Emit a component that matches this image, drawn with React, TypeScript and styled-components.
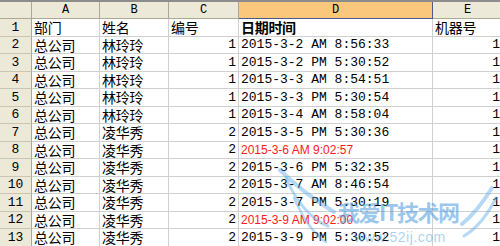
import React from 'react';
import styled, { createGlobalStyle } from 'styled-components';

const GlobalStyle = createGlobalStyle`
  html, body {
    margin: 0;
    padding: 0;
    background: #ffffff;
    overflow: hidden;
  }
`;

const COLS = '32px 68px 69px 70px 194px 70px';

const Wrap = styled.div`
  position: relative;
  width: 500px;
  height: 246px;
  overflow: hidden;
  border-top: 2px solid #8c8c8c;
  box-sizing: border-box;
`;

const Sheet = styled.div`
  display: grid;
  grid-template-columns: ${COLS};
  grid-template-rows: 17px repeat(13, 17.5px);
`;

const ColHead = styled.div<{ $active?: boolean }>`
  display: flex;
  align-items: center;
  justify-content: center;
  background: ${(p) => (p.$active ? '#fbc77c' : '#ece9d8')};
  border-right: 1px solid ${(p) => (p.$active ? '#4d5a8a' : '#aca899')};
  border-bottom: 1px solid ${(p) => (p.$active ? '#4d5a8a' : '#aca899')};
  font-family: 'Liberation Mono', monospace;
  font-size: 12px;
  line-height: 1;
  color: #000;
  box-sizing: border-box;
`;

const RowNum = styled.div`
  display: flex;
  align-items: center;
  justify-content: center;
  background: #ece9d8;
  border-right: 1px solid #aca899;
  border-bottom: 1px solid #c9c6b6;
  font-family: 'Liberation Mono', monospace;
  font-size: 13px;
  line-height: 1;
  color: #000;
  box-sizing: border-box;
`;

const Cell = styled.div<{ $right?: boolean }>`
  display: flex;
  align-items: center;
  justify-content: ${(p) => (p.$right ? 'flex-end' : 'flex-start')};
  padding: 0 2px;
  border-right: 1px solid #d0d0d0;
  border-bottom: 1px solid #d0d0d0;
  box-sizing: border-box;
  white-space: nowrap;
  overflow: visible;
  font-family: 'Liberation Mono', monospace;
  font-size: 13px;
  line-height: 1;
  color: #000;
`;

const CnText = styled.span<{ $bold?: boolean }>`
  font-family: 'Noto Sans CJK SC', sans-serif;
  font-size: 14px;
  line-height: 1;
  font-weight: ${(p) => (p.$bold ? 700 : 400)};
  letter-spacing: -0.3px;
`;

const RedTime = styled.span`
  font-family: 'Liberation Sans', Arial, sans-serif;
  font-size: 12px;
  line-height: 1;
  color: #ff1a1a;
`;

const Watermark = styled.div`
  position: absolute;
  left: 268px;
  top: 166px;
  width: 232px;
  height: 80px;
  pointer-events: none;
`;

const MarkTitle = styled.div`
  position: absolute;
  left: 70px;
  top: 32px;
  font-family: 'Noto Sans CJK SC', sans-serif;
  font-size: 22px;
  line-height: 1;
  font-weight: 700;
  color: rgba(70, 150, 220, 0.55);
  letter-spacing: -1.5px;
`;

const MarkUrl = styled.div`
  position: absolute;
  left: 86px;
  top: 62px;
  font-family: 'Liberation Sans', sans-serif;
  font-size: 14px;
  line-height: 1;
  color: rgba(90, 165, 225, 0.5);
  letter-spacing: 0.5px;
`;

type Row = {
  dept: string;
  name: string;
  no: string;
  time: string;
  red?: boolean;
  machine: string;
};

const rows: Row[] = [
  { dept: '总公司', name: '林玲玲', no: '1', time: '2015-3-2 AM 8:56:33', machine: '1' },
  { dept: '总公司', name: '林玲玲', no: '1', time: '2015-3-2 PM 5:30:52', machine: '1' },
  { dept: '总公司', name: '林玲玲', no: '1', time: '2015-3-3 AM 8:54:51', machine: '1' },
  { dept: '总公司', name: '林玲玲', no: '1', time: '2015-3-3 PM 5:30:54', machine: '1' },
  { dept: '总公司', name: '林玲玲', no: '1', time: '2015-3-4 AM 8:58:04', machine: '1' },
  { dept: '总公司', name: '凌华秀', no: '2', time: '2015-3-5 PM 5:30:36', machine: '1' },
  { dept: '总公司', name: '凌华秀', no: '2', time: '2015-3-6 AM 9:02:57', red: true, machine: '1' },
  { dept: '总公司', name: '凌华秀', no: '2', time: '2015-3-6 PM 5:32:35', machine: '1' },
  { dept: '总公司', name: '凌华秀', no: '2', time: '2015-3-7 AM 8:46:54', machine: '1' },
  { dept: '总公司', name: '凌华秀', no: '2', time: '2015-3-7 PM 5:30:19', machine: '1' },
  { dept: '总公司', name: '凌华秀', no: '2', time: '2015-3-9 AM 9:02:00', red: true, machine: '1' },
  { dept: '总公司', name: '凌华秀', no: '2', time: '2015-3-9 PM 5:30:52', machine: '1' },
];

const letters = ['A', 'B', 'C', 'D', 'E'];

const App: React.FC = () => {
  return (
    <>
      <GlobalStyle />
      <Wrap>
        <Sheet>
          <ColHead />
          {letters.map((l) => (
            <ColHead key={l} $active={l === 'D'}>
              {l}
            </ColHead>
          ))}

          <RowNum>1</RowNum>
          <Cell><CnText>部门</CnText></Cell>
          <Cell><CnText>姓名</CnText></Cell>
          <Cell><CnText>编号</CnText></Cell>
          <Cell><CnText $bold>日期时间</CnText></Cell>
          <Cell><CnText>机器号</CnText></Cell>

          {rows.map((r, i) => (
            <React.Fragment key={i}>
              <RowNum>{i + 2}</RowNum>
              <Cell><CnText>{r.dept}</CnText></Cell>
              <Cell><CnText>{r.name}</CnText></Cell>
              <Cell $right>{r.no}</Cell>
              <Cell>{r.red ? <RedTime>{r.time}</RedTime> : r.time}</Cell>
              <Cell $right>{r.machine}</Cell>
            </React.Fragment>
          ))}
        </Sheet>

        <Watermark>
          <svg width="232" height="80" viewBox="0 0 232 80">
            <g fill="none" stroke="rgba(90,170,230,0.45)" strokeLinecap="round">
              <path d="M12 2 C30 20 50 34 66 44" strokeWidth="4" />
              <path d="M18 10 C28 34 44 52 60 58" strokeWidth="3" />
              <path d="M26 30 C36 52 48 68 58 74" strokeWidth="2.5" />
              <path d="M224 20 C214 36 204 48 194 56" strokeWidth="4" />
              <path d="M228 30 C218 50 206 62 196 68" strokeWidth="3" />
            </g>
          </svg>
          <MarkTitle>我爱IT技术网</MarkTitle>
          <MarkUrl>www.52ij.com</MarkUrl>
        </Watermark>
      </Wrap>
    </>
  );
};

export default App;
